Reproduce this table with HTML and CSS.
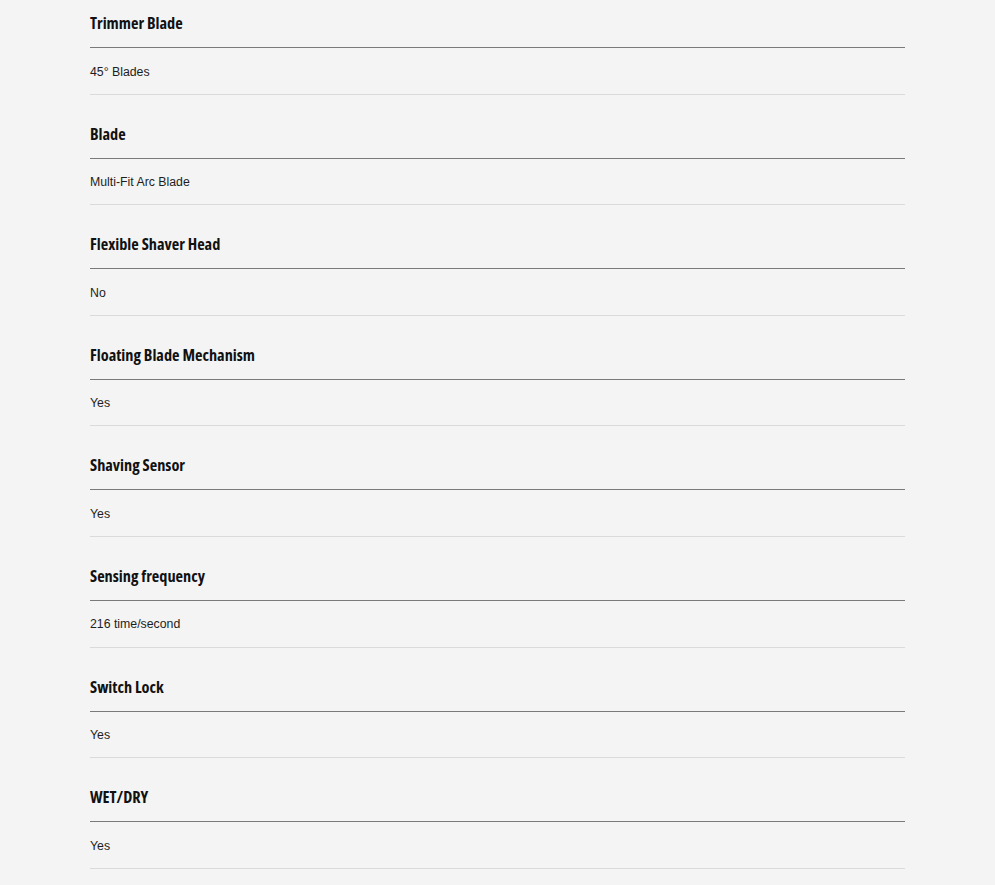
FILE: index.html
```html
<!DOCTYPE html>
<html lang="en">
<head>
<meta charset="utf-8">
<title>Specifications</title>
<link rel="stylesheet" href="styles.css">
</head>
<body>
<div class="specs">
  <section class="spec"><h3 class="spec-title">Trimmer Blade</h3><p class="spec-value">45° Blades</p></section>
  <section class="spec"><h3 class="spec-title">Blade</h3><p class="spec-value">Multi-Fit Arc Blade</p></section>
  <section class="spec"><h3 class="spec-title">Flexible Shaver Head</h3><p class="spec-value">No</p></section>
  <section class="spec"><h3 class="spec-title">Floating Blade Mechanism</h3><p class="spec-value">Yes</p></section>
  <section class="spec"><h3 class="spec-title">Shaving Sensor</h3><p class="spec-value">Yes</p></section>
  <section class="spec"><h3 class="spec-title">Sensing frequency</h3><p class="spec-value">216 time/second</p></section>
  <section class="spec"><h3 class="spec-title">Switch Lock</h3><p class="spec-value">Yes</p></section>
  <section class="spec"><h3 class="spec-title">WET/DRY</h3><p class="spec-value">Yes</p></section>
</div>
</body>
</html>
```
FILE: styles.css
```css
html, body {
  margin: 0;
  padding: 0;
  background: #f4f4f4;
}
.specs {
  width: 815px;
  margin: 0 0 0 90px;
  display: flex;
  flex-direction: column;
}
.spec {
  padding-top: 27px;
}
.spec:first-child {
  padding-top: 11px;
}
.spec-title {
  margin: 0;
  padding-bottom: 12px;
  border-bottom: 1px solid #7a7a7a;
  font-family: "Open Sans", "Liberation Sans", sans-serif;
  font-stretch: 75%;
  font-weight: 700;
  font-size: 16.3px;
  line-height: 24px;
  color: #111;
}
.spec-value {
  margin: 0;
  padding: 14.5px 0 11.5px;
  border-bottom: 1px solid #dadada;
  font-family: "Liberation Sans", Arial, sans-serif;
  font-size: 12.3px;
  line-height: 19.6px;
  color: #1e1e1e;
}
```
